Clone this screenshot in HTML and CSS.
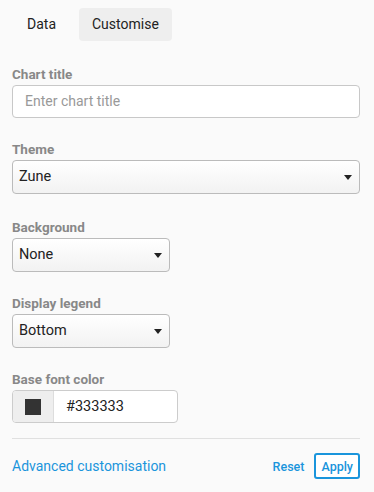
FILE: index.html
```html
<!DOCTYPE html>
<html lang="en">
<head>
    <meta charset="UTF-8">
    <meta name="viewport" content="width=device-width, initial-scale=1.0">
    <title>Customise chart</title>
    <link rel="stylesheet" href="styles.css">
</head>
<body>
    <div class="tabs">
        <span class="tab">Data</span>
        <span class="tab active">Customise</span>
    </div>

    <div class="field">
        <label class="label">Chart title</label>
        <div class="text-input placeholder">Enter chart title</div>
    </div>

    <div class="field theme">
        <label class="label">Theme</label>
        <div class="select wide">Zune<span class="caret"></span></div>
    </div>

    <div class="field">
        <label class="label">Background</label>
        <div class="select narrow">None<span class="caret"></span></div>
    </div>

    <div class="field">
        <label class="label">Display legend</label>
        <div class="select narrow">Bottom<span class="caret"></span></div>
    </div>

    <div class="field">
        <label class="label">Base font color</label>
        <div class="color-group">
            <div class="swatch-box"><span class="swatch"></span></div>
            <div class="color-value">#333333</div>
        </div>
    </div>

    <div class="footer">
        <a class="link" href="#">Advanced customisation</a>
        <div class="actions">
            <a class="link reset" href="#">Reset</a>
            <button class="apply">Apply</button>
        </div>
    </div>
</body>
</html>
```

FILE: styles.css
```css
body {
    font-family: Roboto, 'Liberation Sans', sans-serif;
    background-color: #fafafa;
    color: #222;
    margin: 0;
    padding: 8px 14px 0 12px;
    font-size: 14px;
}

.tabs {
    display: flex;
    gap: 10px;
    margin-bottom: 25px;
}

.tab {
    padding: 0 13px;
    height: 33px;
    line-height: 33px;
    border-radius: 4px;
    color: #222;
}

.tab:first-child {
    padding-left: 15px;
}

.tab.active {
    background-color: #eeeeee;
}

.field {
    margin-bottom: 23px;
}

.field.theme {
    margin-bottom: 25px;
}

.label {
    display: block;
    color: #888;
    font-weight: bold;
    font-size: 13.5px;
    line-height: 16px;
    margin-bottom: 3px;
}

.text-input {
    height: 31px;
    line-height: 31px;
    padding: 0 12px;
    border: 1px solid #c8c8c8;
    border-radius: 4px;
    background-color: white;
}

.placeholder {
    color: #999;
}

.select {
    position: relative;
    box-sizing: border-box;
    height: 34px;
    line-height: 32px;
    padding: 0 6px;
    border: 1px solid #bbb;
    border-radius: 4px;
    background: linear-gradient(#ffffff, #f2f2f2);
    color: #222;
    font-size: 14.5px;
}

.select.narrow {
    width: 158px;
}

.caret {
    position: absolute;
    right: 7px;
    top: 14px;
    width: 0;
    height: 0;
    border-left: 4.5px solid transparent;
    border-right: 4.5px solid transparent;
    border-top: 5px solid #222;
}

.color-group {
    display: flex;
    width: 166px;
    height: 33px;
    box-sizing: border-box;
    border: 1px solid #ccc;
    border-radius: 4px;
    background-color: white;
    overflow: hidden;
}

.swatch-box {
    width: 40px;
    background-color: #eeeeee;
    border-right: 1px solid #ddd;
    display: flex;
    align-items: center;
    justify-content: center;
}

.swatch {
    width: 16px;
    height: 16px;
    background-color: #333;
}

.color-value {
    line-height: 31px;
    padding-left: 12px;
    font-size: 14.5px;
}

.footer {
    border-top: 1px solid #e0e0e0;
    margin-top: -8px;
    padding-top: 14px;
    display: flex;
    justify-content: space-between;
    align-items: center;
}

.link {
    color: #1a95dc;
    text-decoration: none;
}

.actions {
    display: flex;
    align-items: center;
    gap: 10px;
}

.reset {
    font-size: 12.5px;
    font-weight: 500;
}

.apply {
    font-family: inherit;
    font-size: 12.5px;
    font-weight: 500;
    color: #1a95dc;
    background: white;
    border: 2px solid #1a95dc;
    border-radius: 3px;
    padding: 0 5px;
    height: 26px;
}
```
